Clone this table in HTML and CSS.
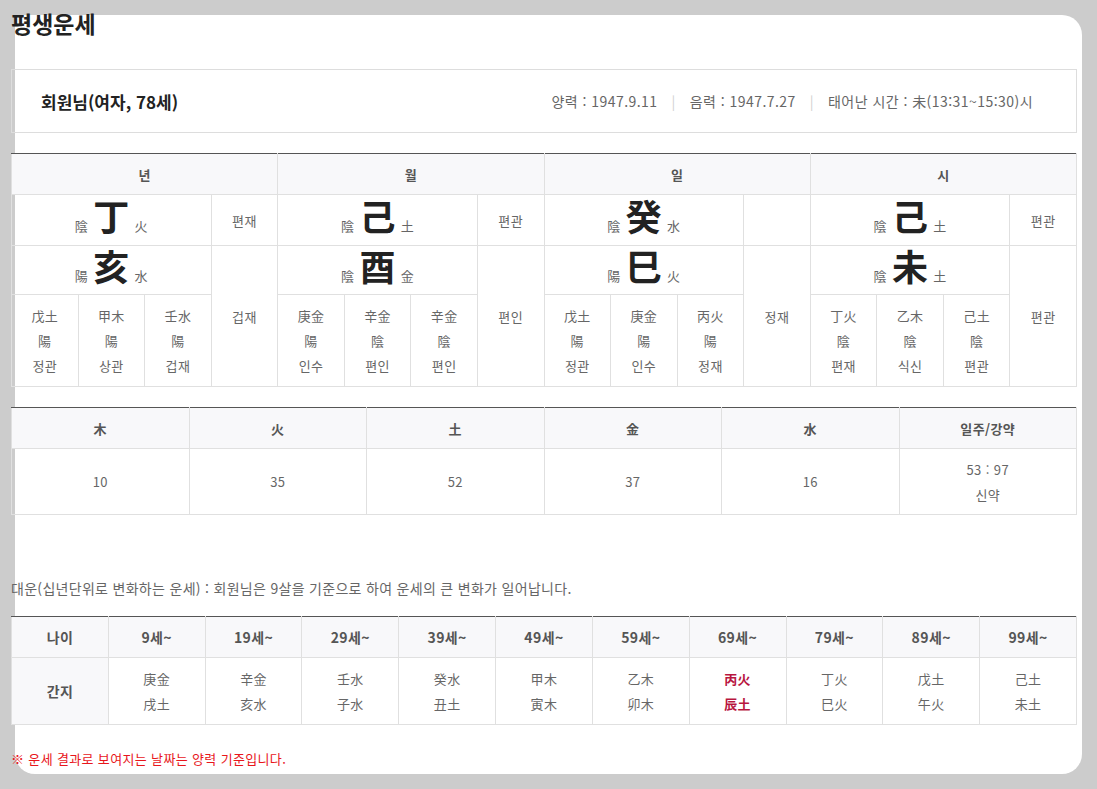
FILE: index.html
```html
<!DOCTYPE html>
<html lang="ko">
<head>
<meta charset="utf-8">
<title>평생운세</title>
<link rel="stylesheet" href="styles.css">
</head>
<body>
<div class="card">
  <div class="content">
    <h1 class="title">평생운세</h1>

    <div class="info">
      <div class="info-name">회원님(여자, 78세)</div>
      <div class="info-dates">
        <span>양력 : 1947.9.11</span>
        <span class="sep">|</span>
        <span>음력 : 1947.7.27</span>
        <span class="sep">|</span>
        <span>태어난 시간 : 未(13:31~15:30)시</span>
      </div>
    </div>

    <table class="saju">
      <colgroup>
        <col><col><col><col><col><col><col><col><col><col><col><col><col><col><col><col>
      </colgroup>
      <tr class="head">
        <th colspan="4">년</th>
        <th colspan="4">월</th>
        <th colspan="4">일</th>
        <th colspan="4">시</th>
      </tr>
      <tr class="r1">
        <td colspan="3" class="pillar"><span class="sm">陰</span><span class="big">丁</span><span class="sm">火</span></td>
        <td>편재</td>
        <td colspan="3" class="pillar"><span class="sm">陰</span><span class="big">己</span><span class="sm">土</span></td>
        <td>편관</td>
        <td colspan="3" class="pillar"><span class="sm">陰</span><span class="big">癸</span><span class="sm">水</span></td>
        <td></td>
        <td colspan="3" class="pillar"><span class="sm">陰</span><span class="big">己</span><span class="sm">土</span></td>
        <td>편관</td>
      </tr>
      <tr class="r2">
        <td colspan="3" class="pillar"><span class="sm">陽</span><span class="big">亥</span><span class="sm">水</span></td>
        <td rowspan="2" class="side">겁재</td>
        <td colspan="3" class="pillar"><span class="sm">陰</span><span class="big">酉</span><span class="sm">金</span></td>
        <td rowspan="2" class="side">편인</td>
        <td colspan="3" class="pillar"><span class="sm">陽</span><span class="big">巳</span><span class="sm">火</span></td>
        <td rowspan="2" class="side">정재</td>
        <td colspan="3" class="pillar"><span class="sm">陰</span><span class="big">未</span><span class="sm">土</span></td>
        <td rowspan="2" class="side">편관</td>
      </tr>
      <tr class="r3">
        <td>戊土<br>陽<br>정관</td>
        <td>甲木<br>陽<br>상관</td>
        <td>壬水<br>陽<br>겁재</td>
        <td>庚金<br>陽<br>인수</td>
        <td>辛金<br>陰<br>편인</td>
        <td>辛金<br>陰<br>편인</td>
        <td>戊土<br>陽<br>정관</td>
        <td>庚金<br>陽<br>인수</td>
        <td>丙火<br>陽<br>정재</td>
        <td>丁火<br>陰<br>편재</td>
        <td>乙木<br>陰<br>식신</td>
        <td>己土<br>陰<br>편관</td>
      </tr>
    </table>

    <table class="ohang">
      <tr class="head">
        <th>木</th><th>火</th><th>土</th><th>金</th><th>水</th><th>일주/강약</th>
      </tr>
      <tr class="data">
        <td>10</td><td>35</td><td>52</td><td>37</td><td>16</td><td>53 : 97<br>신약</td>
      </tr>
    </table>

    <p class="desc">대운(십년단위로 변화하는 운세) : 회원님은 9살을 기준으로 하여 운세의 큰 변화가 일어납니다.</p>

    <table class="daeun">
      <tr class="head">
        <th class="label">나이</th>
        <th>9세~</th><th>19세~</th><th>29세~</th><th>39세~</th><th>49세~</th>
        <th>59세~</th><th>69세~</th><th>79세~</th><th>89세~</th><th>99세~</th>
      </tr>
      <tr class="data">
        <th class="label">간지</th>
        <td>庚金<br>戌土</td>
        <td>辛金<br>亥水</td>
        <td>壬水<br>子水</td>
        <td>癸水<br>丑土</td>
        <td>甲木<br>寅木</td>
        <td>乙木<br>卯木</td>
        <td class="now">丙火<br>辰土</td>
        <td>丁火<br>巳火</td>
        <td>戊土<br>午火</td>
        <td>己土<br>未土</td>
      </tr>
    </table>

    <p class="note">※ 운세 결과로 보여지는 날짜는 양력 기준입니다.</p>
  </div>
</div>
</body>
</html>
```

FILE: styles.css
```css
html, body {
  margin: 0;
  padding: 0;
}
body {
  background: #cccccc;
  font-family: "Noto Sans CJK KR", "Noto Sans", sans-serif;
  color: #666;
}
.card {
  margin: 15px 15px 15px 15px;
  height: 759px;
  background: #fff;
  border-radius: 0 20px 20px 20px;
}
.content {
  margin: 0 5px 0 -4px;
  position: relative;
  top: -7px;
}
.title {
  margin: 0 0 31px 0;
  font-size: 23px;
  line-height: 30px;
  font-weight: 700;
  color: #222;
}
.info {
  height: 62px;
  border: 1px solid #dddddd;
  display: flex;
  align-items: center;
  justify-content: space-between;
  padding: 0 43px 0 29px;
}
.info-name {
  font-size: 17px;
  font-weight: 700;
  color: #222;
}
.info-dates {
  display: flex;
  gap: 14px;
  font-size: 14px;
  letter-spacing: 0.45px;
  color: #666;
}
.sep {
  color: #d0d0d0;
}
table {
  width: 100%;
  border-collapse: collapse;
  table-layout: fixed;
  border-top: 1px solid #555;
  text-align: center;
}
th, td {
  border: 1px solid #e0e0e0;
  padding: 0;
  font-size: 13px;
  letter-spacing: 0.4px;
  color: #666;
  font-weight: 400;
}
tr:first-child th {
  border-top: 1px solid #555;
}
.head th {
  background: #f8f8fa;
  font-weight: 700;
  color: #555;
  height: 40px;
}
.saju {
  margin-top: 20px;
}
.saju .r1 td {
  height: 50px;
}
.saju .r2 td {
  height: 49px;
}
.saju td.pillar {
  padding-bottom: 8px;
  box-sizing: border-box;
}
.saju .r3 td {
  height: 92px;
  line-height: 25px;
  vertical-align: top;
  padding-top: 8px;
  box-sizing: border-box;
}
.saju td.side {
  vertical-align: middle;
  padding-top: 0;
}
.sm {
  font-size: 13px;
  color: #666;
}
.big {
  font-size: 36px;
  line-height: 36px;
  font-weight: 700;
  color: #222;
  margin: 0 5px;
}
.ohang {
  margin-top: 20px;
}
.ohang .data td {
  height: 65px;
  line-height: 25px;
}
.desc {
  margin: 63px 0 0 0;
  font-size: 14px;
  letter-spacing: 0.3px;
  line-height: 20px;
  color: #666;
}
.daeun {
  margin-top: 18px;
  border-left: 1px solid #e0e0e0;
}
.daeun .head th {
  font-size: 14px;
}
.daeun th.label {
  background: #f8f8fa;
  font-weight: 700;
  color: #555;
  font-size: 14px;
}
.daeun .data td, .daeun .data th {
  height: 66px;
  line-height: 25px;
}
.daeun td.now {
  color: #b8163f;
  font-weight: 700;
}
.note {
  margin: 24px 0 0 0;
  font-size: 13px;
  letter-spacing: 0.35px;
  line-height: 20px;
  color: #e8161b;
}
```
